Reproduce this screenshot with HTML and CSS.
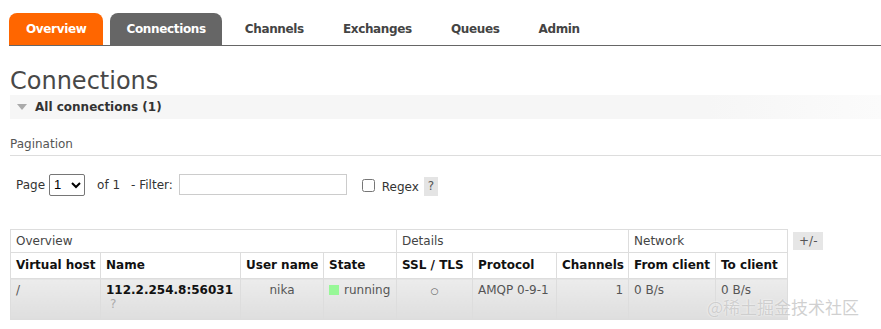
FILE: index.html
```html
<!DOCTYPE html>
<html lang="en">
  <head>
    <meta charset="UTF-8" />
    <title>RabbitMQ Management - Connections</title>
    <link rel="stylesheet" href="styles.css">
  </head>
  <body>
    <ul class="tabs">
      <li class="tab tab-overview">Overview</li>
      <li class="tab tab-active">Connections</li>
      <li class="tab">Channels</li>
      <li class="tab">Exchanges</li>
      <li class="tab">Queues</li>
      <li class="tab">Admin</li>
    </ul>

    <div class="main">
      <h1>Connections</h1>
      <div class="section-head">
        <span class="arrow"></span>
        <span>All connections (1)</span>
      </div>

      <div class="pagination">
        <h3>Pagination</h3>
        <div class="filter-row">
          <label>Page</label>
          <select class="page-select"><option>1</option></select>
          <span class="of">of 1</span>
          <label>- Filter:</label>
          <input type="text" class="filter-input" />
          <input type="checkbox" class="regex-box" />
          <label class="regex-label">Regex</label>
          <span class="help">?</span>
        </div>
      </div>

      <div class="table-wrap">
        <table class="list">
          <colgroup>
            <col class="c-vhost"><col class="c-name"><col class="c-user"><col class="c-state">
            <col class="c-ssl"><col class="c-proto"><col class="c-chan"><col class="c-from"><col class="c-to">
          </colgroup>
          <thead>
            <tr class="group-row">
              <th colspan="4">Overview</th>
              <th colspan="3">Details</th>
              <th colspan="2">Network</th>
            </tr>
            <tr class="head-row">
              <th>Virtual host</th>
              <th>Name</th>
              <th>User name</th>
              <th>State</th>
              <th>SSL / TLS</th>
              <th>Protocol</th>
              <th>Channels</th>
              <th>From client</th>
              <th>To client</th>
            </tr>
          </thead>
          <tbody>
            <tr class="data-row">
              <td>/</td>
              <td><b>112.2.254.8:56031</b><div class="muted">?</div></td>
              <td class="center">nika</td>
              <td><span class="status-green"></span>running</td>
              <td class="center"><span class="dot">&#9675;</span></td>
              <td>AMQP 0-9-1</td>
              <td class="right">1</td>
              <td>0 B/s</td>
              <td>0 B/s</td>
            </tr>
          </tbody>
        </table>
        <span class="toggle">+/-</span>
      </div>
    </div>

    <div class="watermark">@稀土掘金技术社区</div>
  </body>
</html>
```

FILE: styles.css
```css
body {
  margin: 0;
  font-family: "DejaVu Sans", Verdana, sans-serif;
  font-size: 12px;
  color: #484848;
  position: relative;
  min-height: 329px;
}
.tabs {
  list-style: none;
  margin: 0 0 0 9px;
  padding: 13px 0 0;
  display: flex;
  border-bottom: 1px solid #666;
}
.tab {
  height: 32px;
  line-height: 32px;
  padding: 0 16px;
  margin-right: 7px;
  font-weight: bold;
  font-size: 12px;
  letter-spacing: -0.35px;
  color: #444;
  border-radius: 8px 8px 0 0;
}
.tab-overview {
  background-color: #f60;
  color: #fff;
  padding: 0 17px;
}
.tab-active {
  background-color: #666;
  color: #fff;
}
.main {
  padding: 0 0 0 10px;
}
h1 {
  margin: 20px 0 0;
  font-size: 24px;
  font-weight: normal;
  line-height: 30px;
  color: #484848;
}
.section-head {
  display: flex;
  align-items: center;
  height: 24px;
  margin-top: -1px;
  background: linear-gradient(to right, #f6f6f6 80%, #fbfbfb);
  font-weight: bold;
  font-size: 12px;
  color: #333;
}
.arrow {
  width: 0;
  height: 0;
  margin: 0 8px 0 7px;
  border-left: 5px solid transparent;
  border-right: 5px solid transparent;
  border-top: 6px solid #aaa;
}
.pagination h3 {
  margin: 18px 0 0;
  font-size: 12px;
  font-weight: normal;
  color: #555;
  padding-bottom: 4px;
  border-bottom: 1px solid #ddd;
}
.filter-row {
  display: flex;
  align-items: center;
  margin: 17px 0 0 6px;
  color: #333;
  font-size: 12px;
}
.page-select {
  margin: 0 0 0 4px;
  width: 36px;
  height: 22px;
  font-size: 13px;
  border: 1px solid #767676;
  border-radius: 2px;
  background: #fff;
}
.of {
  margin: 0 11px 0 12px;
}
.filter-input {
  margin-left: 6px;
  width: 168px;
  height: 21px;
  box-sizing: border-box;
  border: 1px solid #ccc;
}
.regex-box {
  margin: 2px 7px 0 15px;
  width: 13px;
  height: 13px;
}
.regex-label {
  margin-top: 4px;
}
.help {
  margin: 4px 0 0 5px;
  width: 14px;
  height: 19px;
  line-height: 19px;
  text-align: center;
  background-color: #e4e4e4;
  color: #555;
}
.table-wrap {
  display: flex;
  align-items: flex-start;
  margin-top: 33px;
}
.list {
  border-collapse: collapse;
  width: 777px;
  table-layout: fixed;
}
.c-vhost { width: 90px; }
.c-name { width: 140px; }
.c-user { width: 83px; }
.c-state { width: 73px; }
.c-ssl { width: 76px; }
.c-proto { width: 84px; }
.c-chan { width: 72px; }
.c-from { width: 87px; }
.c-to { width: 72px; }
.list th, .list td {
  border: 1px solid #ddd;
  padding: 4px 5px;
  text-align: left;
  vertical-align: top;
  white-space: nowrap;
  overflow: hidden;
}
.group-row th {
  font-weight: normal;
  color: #444;
  height: 14px;
}
.head-row th {
  font-weight: bold;
  font-size: 12px;
  color: #111;
  height: 16px;
  padding-top: 5px;
}
.data-row td {
  background: linear-gradient(#ececec, #dedede);
  color: #555;
  height: 32px;
}
.data-row b {
  color: #111;
}
.muted {
  color: #aaa;
  padding-left: 4px;
}
.center {
  text-align: center !important;
}
.right {
  text-align: right !important;
}
.status-green {
  display: inline-block;
  width: 10px;
  height: 10px;
  margin-right: 5px;
  background-color: #98f898;
  vertical-align: -1px;
}
.dot {
  font-size: 9px;
}
.toggle {
  margin: 3px 0 0 5px;
  padding: 0 6px;
  height: 18px;
  line-height: 18px;
  background-color: #e6e6e6;
  color: #555;
}
.watermark {
  position: absolute;
  left: 707px;
  top: 294px;
  font-family: "Noto Sans CJK SC", sans-serif;
  font-size: 17px;
  color: rgba(200, 200, 200, 0.85);
  text-shadow: 0 0 2px #fff;
}
```
